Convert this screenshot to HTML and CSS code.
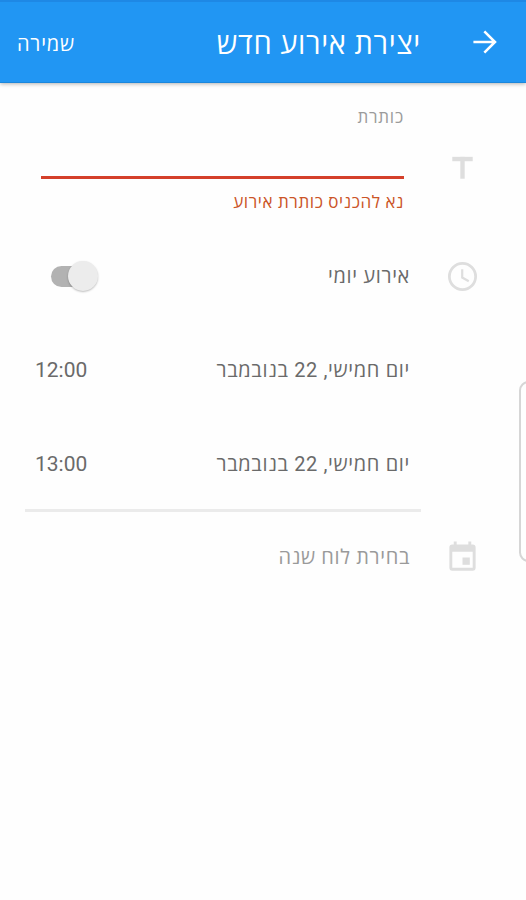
FILE: index.html
```html
<!DOCTYPE html>
<html lang="he" dir="rtl">
<head>
    <meta charset="UTF-8">
    <meta name="viewport" content="width=device-width, initial-scale=1.0">
    <title>יצירת אירוע חדש</title>
    <link rel="stylesheet" href="styles.css">
</head>
<body>
    <header class="app-bar">
        <svg class="back-icon" viewBox="0 0 24 24" fill="none" stroke="currentColor" stroke-width="1.9">
            <path d="M3.3 12h16M11.5 4l8 8-8 8"/>
        </svg>
        <h1>יצירת אירוע חדש</h1>
        <span class="save">שמירה</span>
    </header>

    <main>
        <section class="title-row">
            <svg class="icon title-icon" viewBox="0 0 24 24" fill="currentColor">
                <rect x="5" y="4" width="14" height="3"/>
                <rect x="10.5" y="4" width="3" height="15"/>
            </svg>
            <div class="field">
                <div class="field-label">כותרת</div>
                <div class="field-line"></div>
                <div class="field-error">נא להכניס כותרת אירוע</div>
            </div>
        </section>

        <div class="row">
            <svg class="icon" viewBox="0 0 24 24" fill="none" stroke="currentColor">
                <circle cx="12" cy="12" r="9" stroke-width="1.9"/>
                <path d="M11.8 7v5.7l4.5 2.6" stroke-width="1.5"/>
            </svg>
            <span class="text">אירוע יומי</span>
            <span class="switch"><span class="thumb"></span></span>
        </div>

        <div class="row">
            <span class="icon"></span>
            <span class="text">יום חמישי, 22 בנובמבר</span>
            <span class="time">12:00</span>
        </div>

        <div class="row">
            <span class="icon"></span>
            <span class="text">יום חמישי, 22 בנובמבר</span>
            <span class="time">13:00</span>
        </div>

        <div class="divider"></div>

        <div class="row">
            <svg class="icon" viewBox="0 0 24 24" fill="currentColor">
                <path fill-rule="evenodd" d="M16 1v2H8V1H6v2H5a2 2 0 0 0-2 2v14a2 2 0 0 0 2 2h14a2 2 0 0 0 2-2V5a2 2 0 0 0-2-2h-1V1zM5 8h14v11H5z"/>
                <rect x="12" y="12" width="5" height="5"/>
            </svg>
            <span class="text muted">בחירת לוח שנה</span>
        </div>
    </main>

    <div class="edge-handle"></div>
</body>
</html>
```

FILE: styles.css
```css
* {
    margin: 0;
    padding: 0;
    box-sizing: border-box;
}

body {
    font-family: Roboto, "Open Sans", sans-serif;
    background-color: #fefefe;
    color: #6a6a6a;
    height: 900px;
    overflow: hidden;
    position: relative;
}

.app-bar {
    display: flex;
    align-items: center;
    height: 83px;
    padding: 1px 25px 0 17px;
    background-color: #2196f3;
    border-top: 2px solid #1e88e5;
    border-bottom: 1px solid #1b87dc;
    box-shadow: 0 1px 4px rgba(0, 0, 0, 0.3);
    color: #ffffff;
}

.back-icon {
    width: 32px;
    height: 32px;
    margin-top: -1px;
}

.app-bar h1 {
    margin-top: 2px;
    margin-right: 48px;
    font-size: 29px;
    font-weight: 400;
    line-height: 40px;
    letter-spacing: 0.7px;
}

.save {
    margin-top: 1px;
    margin-right: auto;
    font-size: 20px;
    letter-spacing: 0.8px;
}

.title-row {
    display: flex;
    height: 146px;
    padding: 22px 46px 0 41px;
}

.icon {
    width: 35px;
    height: 35px;
    flex-shrink: 0;
    color: #dedede;
}

.title-icon {
    margin-top: 46px;
}

.field {
    flex: 1;
    margin-right: 41px;
}

.field-label {
    height: 24px;
    font-size: 17px;
    line-height: 24px;
    letter-spacing: 0.8px;
    color: #9b9b9b;
}

.field-line {
    height: 50px;
    border-bottom: 3px solid #d4402a;
}

.field-error {
    margin-top: 11px;
    font-size: 17px;
    line-height: 24px;
    letter-spacing: 0.6px;
    color: #cb5427;
}

.row {
    display: flex;
    align-items: center;
    height: 94px;
    padding: 0 46px 0 35px;
}

.text {
    margin-top: -1px;
    margin-right: 35px;
    font-size: 20px;
    letter-spacing: 0.65px;
}

.muted {
    color: #9a9a9a;
}

.time {
    margin-right: auto;
    font-size: 21px;
}

.switch {
    position: relative;
    width: 42px;
    height: 21px;
    margin-right: auto;
    margin-left: 16px;
    border-radius: 11px;
    background-color: #b2b2b2;
}

.thumb {
    position: absolute;
    top: -5px;
    right: -5px;
    width: 30px;
    height: 30px;
    border-radius: 50%;
    background-color: #ececec;
    box-shadow: 0 1px 2px rgba(0, 0, 0, 0.25);
}

.divider {
    height: 3px;
    margin: -2px 105px -2px 25px;
    background-color: #ebebeb;
}

/* system panel handle on the screen edge */
.edge-handle {
    position: absolute;
    top: 381px;
    right: -12px;
    width: 19px;
    height: 181px;
    border: 2px solid #d6d6d6;
    border-radius: 10px;
}
```
